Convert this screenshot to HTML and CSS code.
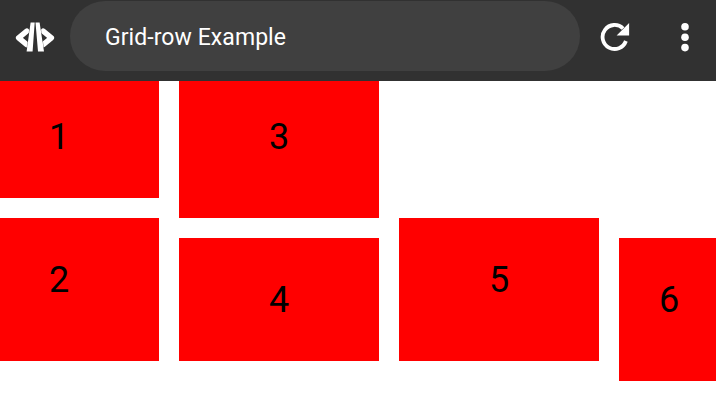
FILE: index.html
```
<!DOCTYPE html>
<html lang="en">
<head>
<meta charset="utf-8">
<title>Grid-row Example</title>
<link rel="stylesheet" href="styles.css">
</head>
<body>
<header class="toolbar">
  <svg class="logo" width="42" height="32" viewBox="0 0 42 32">
    <path class="chevron" d="M12.8 10.2 L4.6 16.8 L12.8 23.6 M29.2 10.2 L37.4 16.8 L29.2 23.6"/>
    <path class="road" d="M16.6 1.4 H20.7 L18.6 30.6 H12.6 Z M21.5 1.4 H25.6 L30 30.6 H24 Z"/>
  </svg>
  <div class="title">Grid-row Example</div>
  <svg class="reload" width="30" height="30" viewBox="0 0 30 30">
    <path class="arc" d="M23.1 6.5 A12 12 0 1 0 25.9 19"/>
    <path class="head" d="M29.1 0.9 V13.4 H16.6 Z"/>
  </svg>
  <svg class="more" width="8" height="30" viewBox="0 0 8 30">
    <circle cx="4" cy="4.7" r="3.8"/><circle cx="4" cy="15.2" r="3.8"/><circle cx="4" cy="25.6" r="3.8"/>
  </svg>
</header>
<main class="grid">
  <div class="item one">1</div>
  <div class="item two">2</div>
  <div class="item three">3</div>
  <div class="item four">4</div>
  <div class="item five">5</div>
  <div class="item six">6</div>
</main>
</body>
</html>
```
FILE: styles.css
```
* { box-sizing: border-box; }
body {
  margin: 0;
  height: 401px;
  overflow: hidden;
  background: #fff;
  font-family: Roboto, sans-serif;
}
.toolbar {
  display: flex;
  align-items: flex-start;
  height: 81px;
  padding: 1px 0 0 14px;
  background: #313131;
}
.toolbar svg { flex: none; fill: #fff; }
.logo { margin-top: 20px; }
.logo .chevron { fill: none; stroke: #fff; stroke-width: 5.4; stroke-linecap: round; stroke-linejoin: round; }
.logo .road { stroke: #313131; stroke-width: 0.6; paint-order: stroke; }
.title {
  flex: none;
  width: 510px;
  height: 70px;
  margin-left: 14px;
  padding-left: 35px;
  border-radius: 35px;
  background: #404040;
  color: #fff;
  font-size: 23px;
  letter-spacing: 0.07px;
  line-height: 74px;
}
.reload { margin: 21px 0 0 20px; }
.reload .arc { fill: none; stroke: #fff; stroke-width: 3.8; }
.more { margin: 21px 0 0 51px; }
.grid {
  display: grid;
  grid-template-columns: 200px 200px 200px 100px;
  grid-template-rows: 117px 20px 20px 123px 20px;
  column-gap: 20px;
  margin-left: -41px;
}
.item {
  padding-top: 41px;
  background: #f00;
  color: #000;
  font-size: 36px;
  line-height: 42px;
  text-align: center;
}
.one { grid-column: 1; grid-row: 1; padding-top: 35px; }
.two { grid-column: 1; grid-row: 3 / 5; }
.three { grid-column: 2; grid-row: 1 / 3; padding-top: 35px; }
.four { grid-column: 2; grid-row: 4; }
.five { grid-column: 3; grid-row: 3 / 5; }
.six { grid-column: 4; grid-row: 4 / 6; }
```
